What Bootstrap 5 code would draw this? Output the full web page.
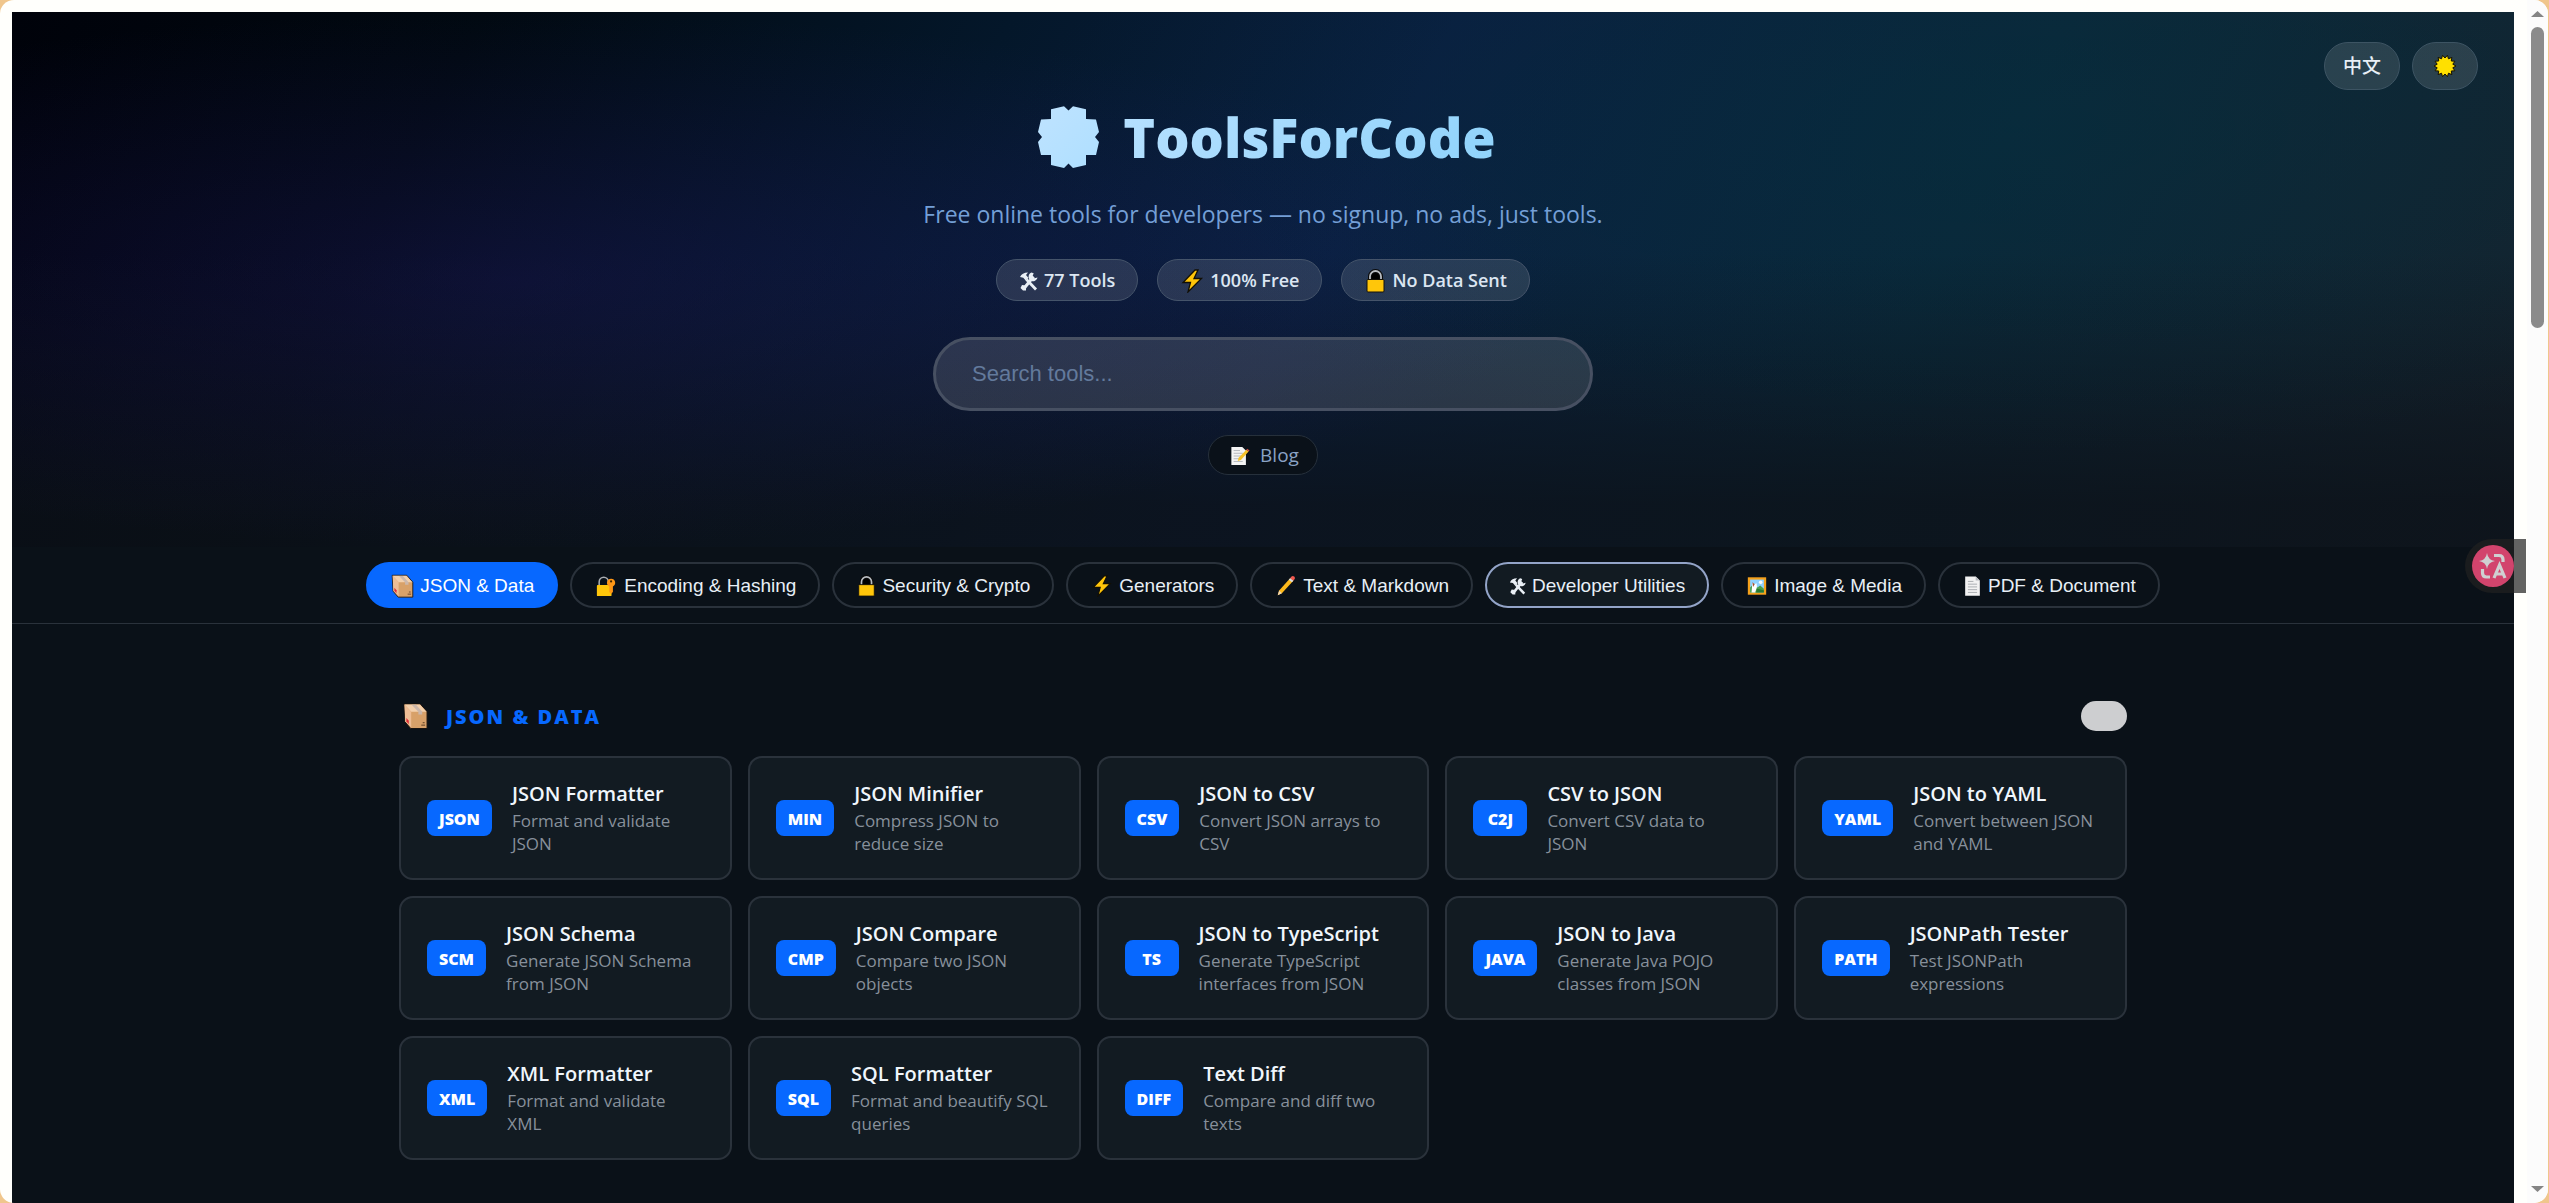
<!DOCTYPE html>
<html lang="en">
<head>
<meta charset="utf-8">
<meta name="viewport" content="width=device-width, initial-scale=1">
<title>ToolsForCode</title>
<link href="https://cdn.jsdelivr.net/npm/bootstrap@5.3.0/dist/css/bootstrap.min.css" rel="stylesheet">
<style>
:root{--page:#0a1118;--panel:#121b22;--line:#2a323b;--blue:#0768ff;--text:#e8eff6;--muted:#87909b}
body{background:#f0c68c;font-family:"Open Sans","Noto Sans","Noto Sans CJK SC",sans-serif;color:var(--text)}
a{text-decoration:none}
svg{display:block;flex:none}
.window-frame{height:100vh;background:#fffffc;border-radius:14px;margin-right:1px;overflow:hidden;padding:12px 0 0 12px}
.viewport{background:var(--page);overflow:hidden}
.hero{padding:93px 24px 72px;background:
 radial-gradient(ellipse 42% 50% at 20% 50%,rgba(40,28,120,.3),transparent),
 radial-gradient(ellipse 40% 60% at 80% 22%,rgba(0,52,66,.32),transparent),
 linear-gradient(to bottom,transparent 45%,rgba(12,17,24,.8) 92%),
 linear-gradient(118deg,#00020a 0%,#010911 17%,#04172a 36%,#0a1f40 52%,#0b2739 74%,#16222c 100%)}
.hero-actions{top:30px;right:36px;gap:12px}
.round-btn{height:48px;border:1px solid #3d5463;border-radius:24px;background:rgba(255,255,255,.12);color:var(--text);font-size:19px;font-weight:500;padding:0 18px}
.round-btn.icon-only{padding:0 20px}
.brand{font-size:54px;line-height:64px;font-weight:800;gap:24px;margin:0 0 30px;padding-left:8px}
.brand-name{background:linear-gradient(135deg,#b6e0ff,#8fd3fb);-webkit-background-clip:text;background-clip:text;color:transparent}
.tagline{font-size:23px;line-height:30px;color:#749fd6;margin:0 0 30px}
.stats{gap:19px;margin-bottom:36px}
.stat{height:42px;border:1px solid #45546a;border-radius:21px;background:rgba(255,255,255,.12);padding:1px 22px 0;font-size:18px;font-weight:600;gap:5px;color:#dce6f2}
.search-box{width:660px;max-width:100%;height:74px;border:3px solid #475062;border-radius:37px;background:rgba(255,255,255,.13);color:var(--text);padding:0 36px;font:22px "Liberation Sans",sans-serif;margin-bottom:24px}
.search-box::placeholder{color:#637a9c}
.blog-link{height:40px;border:1px solid #26303b;border-radius:20px;background:#0a1119;color:#8ba3c4;font-size:19px;padding:1px 18px 0 21px;gap:10px}
.cats{padding:15px 24px;gap:12px;border-bottom:1px solid var(--line)}
.cat{height:46px;border:2px solid var(--line);border-radius:23px;background:transparent;color:var(--text);font:19px "Liberation Sans",sans-serif;padding:2px 22px 0;gap:5px}
.cat.active{background:var(--blue);border-color:var(--blue);color:#fff}
.cat.hovered{background:var(--panel);border-color:#93a4c8}
.tools{max-width:1776px;padding:77px 24px 60px}
.tools-head{height:30px;margin-bottom:25px;padding-left:4px;gap:18px}
.tools-head h2{font-size:20px;line-height:30px;font-weight:800;letter-spacing:2px;color:var(--blue);margin:0;padding-top:2px}
.fold-btn{width:46px;height:30px;border:0;border-radius:15px;background:#cdced0}
.tool{height:100%;border:2px solid var(--line);border-radius:14px;background:var(--panel);padding:23px 28px 23px 26px;gap:20px}
.tag{min-width:54px;height:36px;border-radius:8px;background:var(--blue);color:#fff;font-size:16px;font-weight:800;padding:2px 12px 0}
.tool-name{font-size:20px;line-height:26px;font-weight:600;color:#f0f6fc;margin:0 0 2px}
.tool-desc{font-size:17px;line-height:23px;color:var(--muted);margin:0}
.white-gap{width:13px}
.scroll-rail{width:21px;background:#fcfcfc;margin-top:-12px;padding:11px 4px}
.scroll-thumb{width:13px;height:301px;border-radius:7px;background:#8b8b8b;margin-top:10px}
.translate{top:539px;right:22px;width:61px;height:54px;padding:0 0 0 7px;border:0;border-radius:27px 0 0 27px;background:rgba(33,33,33,.7)}
</style>
</head>
<body>
<svg width="0" height="0" class="position-absolute" aria-hidden="true"><defs>
<symbol id="i-box" viewBox="0 0 26 28"><path d="M1 1.500h17l7 8v17.500H8L2 20z" fill="#d8a169" stroke="#17120f"/><path d="M1.500 2h16l7 7.500H8.500z" fill="#f3d0ac"/><path d="M1.500 2l7 7.500V26L2.300 19.500z" fill="#edbd95"/><path d="M9 2.200h4.500l6.500 7.300v3h-4V9.500z" fill="#cbb7ab"/><path d="M3.500 16l2.500 3v3.500l-2.500-3z" fill="#e02b35"/><path d="M19 23.500h4M20.500 21h2" stroke="#5b3c22"/></symbol>
<symbol id="i-lock" viewBox="0 0 20 24"><path d="M4.500 11V7.500a5.500 5.500 0 0 1 11 0V11" fill="#000" stroke="#0a0a0a" stroke-width="4"/><path d="M4.500 11V7.500a5.500 5.500 0 0 1 11 0V11" fill="none" stroke="#b9bdc2" stroke-width="1.800"/><rect x="1.500" y="10.500" width="17" height="12.500" rx="1" fill="#ffc60a" stroke="#15120a"/></symbol>
<symbol id="i-key" viewBox="0 0 24 24"><path d="M4 12V7.500a5 5 0 0 1 10 0V9" fill="none" stroke="#a9adb2" stroke-width="1.700"/><rect x="1.500" y="11" width="16" height="12" rx="1" fill="#ffc60a"/><path d="M17 4a4.500 4.500 0 0 1 2 8.500v6l-2 2-2-2v-6A4.500 4.500 0 0 1 17 4z" fill="#ff9716"/><circle cx="17" cy="7" r="1.200" fill="#412600"/></symbol>
<symbol id="i-bolt" viewBox="0 0 22 24"><path d="M13.500 1L1.500 13.500h7.500L6.500 23 20 9.500h-7.500l4-8.500z" fill="#ffc50a" stroke="#120f05" stroke-width="1.300"/></symbol>
<symbol id="i-pencil" viewBox="0 0 24 24"><path d="M3 22l1.500-5L16.500 3.500l3.500 2.700L7.500 20z" fill="#fdb91b"/><path d="M4.500 17l3 3L3 22z" fill="#f1d7b5"/><path d="M16.500 3.500l1.500-2q1.500-1 3 .2 1.300 1.300.5 2.600L20 6.200z" fill="#f0584f"/><path d="M15 5.200l1.500-1.700 3.500 2.700-1.500 1.700z" fill="#d7dce1"/></symbol>
<symbol id="i-tools" viewBox="0 0 20 22"><path d="M5 18.500L14.500 6.500" stroke="#e9eff5" stroke-width="3"/><path d="M12.500 2.500a4.500 4.500 0 1 0 6 5l-3 .8-2-2 1.200-3z" fill="#e9eff5"/><path d="M1 7q2-4.500 8-4.500L7 5l2.500 3-2.800 2.500L4.300 7.700z" fill="#e9eff5"/><path d="M7.500 9.500l9.500 10" stroke="#e9eff5" stroke-width="2.800"/><path d="M3 15l4 .5v5H4L1.500 18z" fill="#e9eff5"/></symbol>
<symbol id="i-image" viewBox="0 0 24 24"><rect x="2" y="2.500" width="20" height="19" fill="#f5a11b"/><rect x="4.500" y="5" width="15" height="14" fill="#8fd1ff"/><path d="M4.500 13.500l4-4 4 4 3-2 4 3.500v4h-15z" fill="#4a9f4a"/><path d="M7 8.500l2 1.500 2.500-1 .5 4-2 6H6z" fill="#fff"/><path d="M7 8l2.500 2-1.800 3z" fill="#a84d2d"/><circle cx="16" cy="8" r="2" fill="#f6fbff"/><path d="M12 15l7.500 1.500V19H11z" fill="#287a35"/></symbol>
<symbol id="i-page" viewBox="0 0 20 24"><path d="M2 1.500h11.500l4.500 4.500v16.500H2z" fill="#f2f2f2"/><path d="M13.500 1.500V6H18z" fill="#b9bcc1"/><path d="M5 7h6M5 10h10M5 13h10M5 16h10M5 19h10" stroke="#a5a8ad"/></symbol>
<symbol id="i-memo" viewBox="0 0 22 24"><path d="M1.500 2h12l4 4v16h-16z" fill="#f4f4f4"/><path d="M4 6h7M4 9h10M4 12h8M4 15h7M4 18h10" stroke="#b0b3b8"/><path d="M8.500 17.500l1-3.500L18 5l2.500 2-8.500 9.500z" fill="#f6c22b"/><path d="M18 5l1-1 2.500 2-1 1z" fill="#d64d43"/></symbol>
</defs></svg>

<div class="window-frame d-flex position-relative">
<div class="viewport flex-grow-1">
<header class="hero position-relative d-flex flex-column align-items-center">
 <div class="hero-actions position-absolute d-flex">
  <button class="round-btn" type="button" lang="zh">中文</button>
  <button class="round-btn icon-only d-flex align-items-center" type="button" aria-label="Light theme"><svg width="24" height="24" viewBox="-12 -12 24 24"><path id="sun" fill="#ffe000" stroke="#161200" stroke-width="1"/></svg></button>
 </div>
 <h1 class="brand d-flex align-items-center">
  <svg width="61" height="62" viewBox="0 0 61 62" aria-hidden="true"><defs><linearGradient id="gg" x1="0" y1="0" x2="1" y2="1"><stop stop-color="#bfe3ff"/><stop offset="1" stop-color="#aedfff"/></linearGradient></defs><path fill="url(#gg)" d="M30.500 4.500L26 .3 13 3.300V13L3 13.500 0 26l4 5-4 5 3 13h10v10l13 3 4.500-4.500L35 62l13-3V49h10l3-13-4-5 4-5-3-12.500L48 13V3.300L35 .3z"/></svg>
  <span class="brand-name">ToolsForCode</span>
 </h1>
 <p class="tagline text-center">Free online tools for developers — no signup, no ads, just tools.</p>
 <div class="stats d-flex flex-wrap justify-content-center">
  <span class="stat d-flex align-items-center"><svg width="20" height="22"><use href="#i-tools"/></svg>77 Tools</span>
  <span class="stat d-flex align-items-center"><svg width="25" height="24"><use href="#i-bolt"/></svg>100% Free</span>
  <span class="stat d-flex align-items-center"><svg width="23" height="24"><use href="#i-lock"/></svg>No Data Sent</span>
 </div>
 <input class="search-box" type="search" placeholder="Search tools..." aria-label="Search tools">
 <a class="blog-link d-flex align-items-center" href="#"><svg width="20" height="22"><use href="#i-memo"/></svg>Blog</a>
</header>

<nav class="cats d-flex flex-wrap justify-content-center" aria-label="Categories">
 <button type="button" class="cat active d-flex align-items-center"><svg width="25" height="24"><use href="#i-box"/></svg>JSON &amp; Data</button>
 <button type="button" class="cat d-flex align-items-center"><svg width="25" height="22"><use href="#i-key"/></svg>Encoding &amp; Hashing</button>
 <button type="button" class="cat d-flex align-items-center"><svg width="21" height="22"><use href="#i-lock"/></svg>Security &amp; Crypto</button>
 <button type="button" class="cat d-flex align-items-center"><svg width="24" height="22"><use href="#i-bolt"/></svg>Generators</button>
 <button type="button" class="cat d-flex align-items-center"><svg width="24" height="22"><use href="#i-pencil"/></svg>Text &amp; Markdown</button>
 <button type="button" class="cat hovered d-flex align-items-center"><svg width="18" height="20"><use href="#i-tools"/></svg>Developer Utilities</button>
 <button type="button" class="cat d-flex align-items-center"><svg width="24" height="22"><use href="#i-image"/></svg>Image &amp; Media</button>
 <button type="button" class="cat d-flex align-items-center"><svg width="21" height="22"><use href="#i-page"/></svg>PDF &amp; Document</button>
</nav>

<main class="tools mx-auto">
 <div class="tools-head d-flex align-items-center">
  <svg width="25" height="28"><use href="#i-box"/></svg>
  <h2>JSON &amp; DATA</h2>
  <button class="fold-btn ms-auto" type="button" aria-label="Collapse section"></button>
 </div>
 <div class="row row-cols-1 row-cols-md-2 row-cols-lg-3 row-cols-xl-5 g-3" id="grid"></div>
</main>
</div>
<div class="white-gap flex-shrink-0"></div>
<div class="scroll-rail flex-shrink-0 d-flex flex-column align-items-center" aria-hidden="true">
 <svg width="13" height="6"><path d="M0 6L6.500 0 13 6z" fill="#858585"/></svg>
 <div class="scroll-thumb"></div>
 <svg class="mt-auto" width="13" height="6"><path d="M0 0h13L6.500 6z" fill="#858585"/></svg>
</div>
<button class="translate position-absolute" type="button" aria-label="Translate">
 <svg width="42" height="42" viewBox="0 0 42 42"><circle cx="21" cy="21" r="21" fill="#d2446d"/><path d="M15 8q1 7 8 8-7 1-8 8-1-7-8-8 7-1 8-8z" fill="#cfd0d2"/><path d="M22 10.500h5q4 0 4 4v2.500M10.500 24v4q0 4 4 4h3.500M22 33l5.500-13L33 33M24 29h7" fill="none" stroke="#cfd0d2" stroke-width="3.200"/></svg>
</button>
</div>

<script src="https://cdn.jsdelivr.net/npm/bootstrap@5.3.0/dist/js/bootstrap.bundle.min.js"></script>
<script>
const tools=[
 ['JSON','JSON Formatter','Format and validate JSON'],
 ['MIN','JSON Minifier','Compress JSON to reduce size'],
 ['CSV','JSON to CSV','Convert JSON arrays to CSV'],
 ['C2J','CSV to JSON','Convert CSV data to JSON'],
 ['YAML','JSON to YAML','Convert between JSON and YAML'],
 ['SCM','JSON Schema','Generate JSON Schema from JSON'],
 ['CMP','JSON Compare','Compare two JSON objects'],
 ['TS','JSON to TypeScript','Generate TypeScript interfaces from JSON'],
 ['JAVA','JSON to Java','Generate Java POJO classes from JSON'],
 ['PATH','JSONPath Tester','Test JSONPath expressions'],
 ['XML','XML Formatter','Format and validate XML'],
 ['SQL','SQL Formatter','Format and beautify SQL queries'],
 ['DIFF','Text Diff','Compare and diff two texts']
];
document.getElementById('grid').innerHTML=tools.map(([tag,name,desc])=>`<div class="col"><a class="tool d-flex align-items-center" href="#"><span class="tag d-flex align-items-center justify-content-center flex-shrink-0">${tag}</span><div><h3 class="tool-name">${name}</h3><p class="tool-desc">${desc}</p></div></a></div>`).join('');
// fourteen-point sun
let d='';
for(let i=0;i<28;i++){const r=i%2?8:11,a=i*Math.PI/14;d+=(i?'L':'M')+(r*Math.cos(a)).toFixed(2)+' '+(r*Math.sin(a)).toFixed(2)}
document.getElementById('sun').setAttribute('d',d+'z');
</script>
</body>
</html>
